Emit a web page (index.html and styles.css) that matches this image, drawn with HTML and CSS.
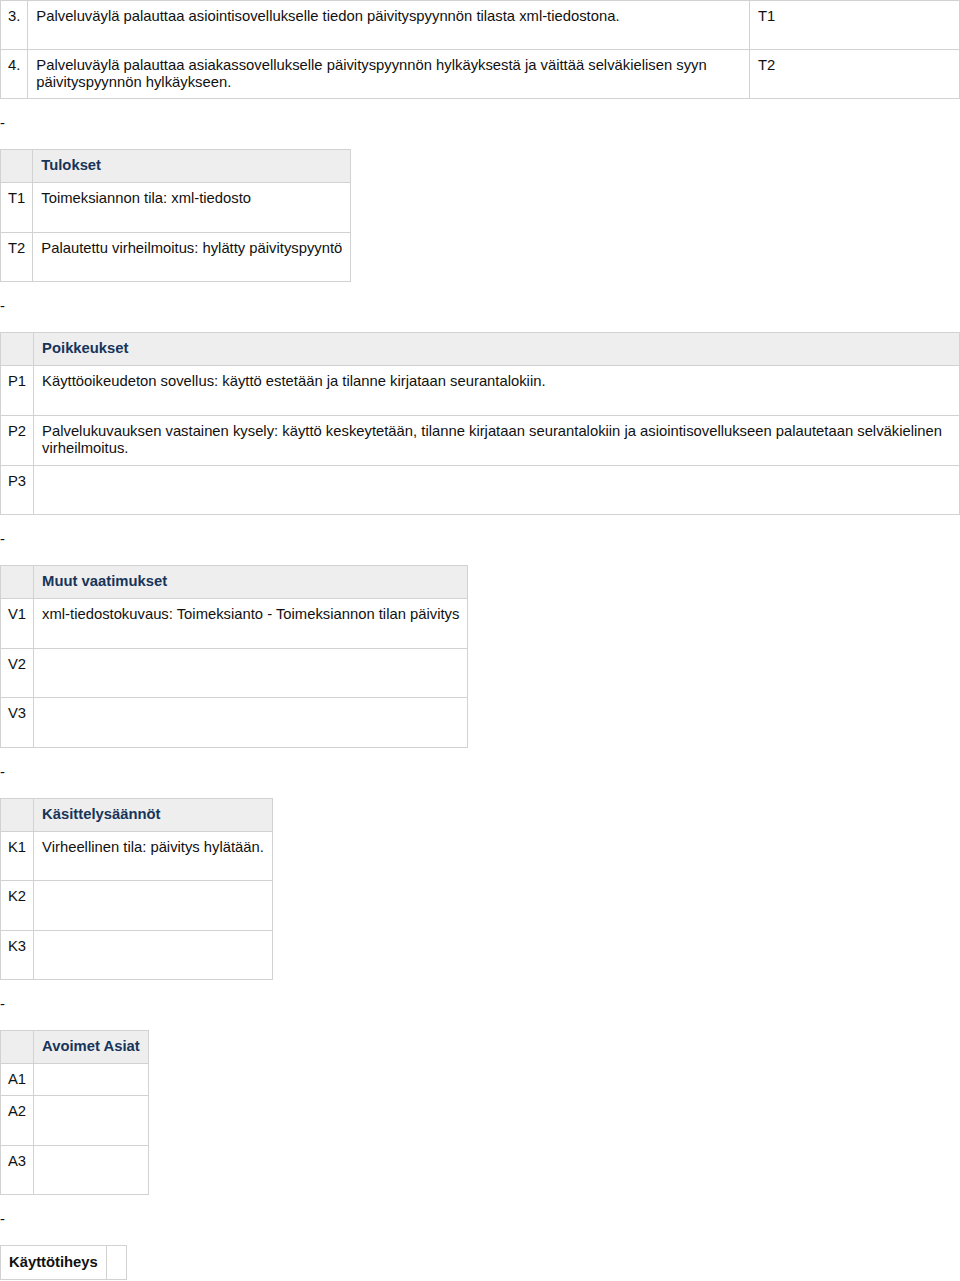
FILE: index.html
```html
<!DOCTYPE html>
<html lang="fi">
<head>
    <meta charset="UTF-8">
    <title>Toimeksiannon tilan päivitys</title>
    <link rel="stylesheet" href="styles.css">
</head>
<body>
    <table class="steps">
        <tr>
            <td class="num">3.</td>
            <td>Palveluväylä palauttaa asiointisovellukselle tiedon päivityspyynnön tilasta xml-tiedostona.</td>
            <td class="ref">T1</td>
        </tr>
        <tr>
            <td class="num">4.</td>
            <td>Palveluväylä palauttaa asiakassovellukselle päivityspyynnön hylkäyksestä ja väittää selväkielisen syyn päivityspyynnön hylkäykseen.</td>
            <td class="ref">T2</td>
        </tr>
    </table>

    <p class="sep">-</p>

    <table class="grid">
        <tr><th></th><th>Tulokset</th></tr>
        <tr><td>T1</td><td>Toimeksiannon tila: xml-tiedosto</td></tr>
        <tr><td>T2</td><td>Palautettu virheilmoitus: hylätty päivityspyyntö</td></tr>
    </table>

    <p class="sep">-</p>

    <table class="grid">
        <tr><th></th><th>Poikkeukset</th></tr>
        <tr><td>P1</td><td>Käyttöoikeudeton sovellus: käyttö estetään ja tilanne kirjataan seurantalokiin.</td></tr>
        <tr><td>P2</td><td>Palvelukuvauksen vastainen kysely: käyttö keskeytetään, tilanne kirjataan seurantalokiin ja asiointisovellukseen palautetaan selväkielinen virheilmoitus.</td></tr>
        <tr><td>P3</td><td></td></tr>
    </table>

    <p class="sep">-</p>

    <table class="grid">
        <tr><th></th><th>Muut vaatimukset</th></tr>
        <tr><td>V1</td><td>xml-tiedostokuvaus: Toimeksianto - Toimeksiannon tilan päivitys</td></tr>
        <tr><td>V2</td><td></td></tr>
        <tr><td>V3</td><td></td></tr>
    </table>

    <p class="sep">-</p>

    <table class="grid">
        <tr><th></th><th>Käsittelysäännöt</th></tr>
        <tr><td>K1</td><td>Virheellinen tila: päivitys hylätään.</td></tr>
        <tr><td>K2</td><td></td></tr>
        <tr><td>K3</td><td></td></tr>
    </table>

    <p class="sep">-</p>

    <table class="grid">
        <tr><th></th><th>Avoimet Asiat</th></tr>
        <tr class="compact"><td>A1</td><td></td></tr>
        <tr><td>A2</td><td></td></tr>
        <tr><td>A3</td><td></td></tr>
    </table>

    <p class="sep">-</p>

    <table class="usage">
        <tr><td class="label">Käyttötiheys</td><td class="blank"></td></tr>
    </table>
</body>
</html>
```

FILE: styles.css
```css
:root {
    --line: #d2d2d2;
    --head-bg: #eeeeee;
    --head-text: #17355a;
}

body {
    margin: 0;
    font-family: "Liberation Sans", Arial, sans-serif;
    font-size: 14.8px;
    line-height: 17px;
    color: #111;
}

table {
    border-collapse: collapse;
}

td, th {
    border: 1px solid var(--line);
    padding: 7px 8px 8px;
    text-align: left;
    vertical-align: top;
}

td {
    height: 33.5px;
}

th {
    background: var(--head-bg);
    color: var(--head-text);
    font-weight: bold;
}

.grid td:first-child,
.grid th:first-child {
    padding-left: 7px;
    padding-right: 7px;
}

.steps {
    width: 100%;
}

.steps td {
    height: 34px;
    padding-bottom: 7px;
}

.steps .num {
    padding-left: 7px;
    padding-right: 7px;
}

.steps .ref {
    width: 193px;
}

.sep {
    margin: 16px 0 17px;
}

.compact td {
    height: auto;
    padding-bottom: 7px;
}

.usage td {
    height: auto;
    padding: 8px;
}

.usage .label {
    font-weight: bold;
}

.usage .blank {
    width: 3px;
}
```
